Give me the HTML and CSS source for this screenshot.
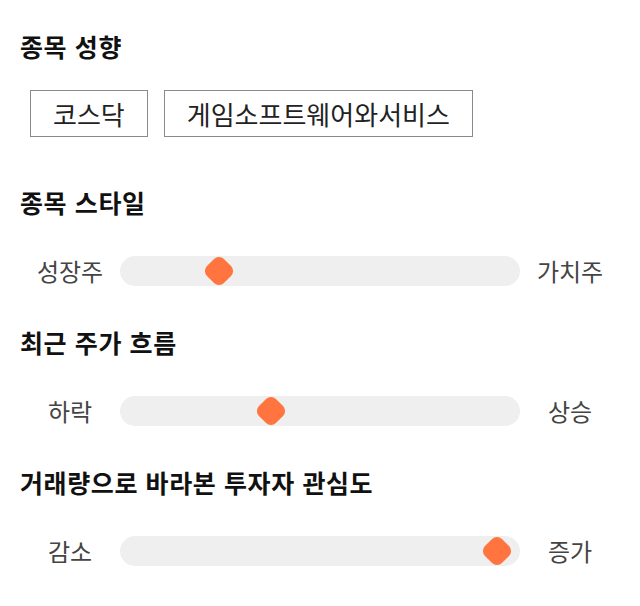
FILE: index.html
```html
<!DOCTYPE html>
<html lang="ko">
<head>
<meta charset="utf-8">
<link rel="stylesheet" href="styles.css">
</head>
<body>
<main class="page">
  <section class="section section-first">
    <h2 class="title">종목 성향</h2>
    <div class="tags">
      <span class="tag">코스닥</span>
      <span class="tag">게임소프트웨어와서비스</span>
    </div>
  </section>
  <section class="section">
    <h2 class="title">종목 스타일</h2>
    <div class="slider-row">
      <span class="label">성장주</span>
      <div class="track"><span class="thumb" style="left: 99px"></span></div>
      <span class="label">가치주</span>
    </div>
  </section>
  <section class="section">
    <h2 class="title">최근 주가 흐름</h2>
    <div class="slider-row">
      <span class="label">하락</span>
      <div class="track"><span class="thumb" style="left: 151px"></span></div>
      <span class="label">상승</span>
    </div>
  </section>
  <section class="section">
    <h2 class="title">거래량으로 바라본 투자자 관심도</h2>
    <div class="slider-row">
      <span class="label">감소</span>
      <div class="track"><span class="thumb" style="left: 377px"></span></div>
      <span class="label">증가</span>
    </div>
  </section>
</main>
</body>
</html>
```

FILE: styles.css
```css
html, body {
  margin: 0;
  padding: 0;
  background: #ffffff;
}
body {
  font-family: "Noto Sans CJK KR", "Noto Sans", sans-serif;
  color: #111111;
}
.page {
  padding: 30px 20px 0 20px;
  display: flex;
  flex-direction: column;
  gap: 40px;
}
.section {
  display: flex;
  flex-direction: column;
}
.section-first {
  padding-bottom: 9px;
}
.title {
  margin: 0;
  font-size: 25px;
  line-height: 32px;
  font-weight: 700;
  letter-spacing: 0.6px;
  color: #111111;
}
.tags {
  margin-top: 28px;
  display: flex;
  gap: 16px;
  padding-left: 10px;
}
.tag {
  display: inline-flex;
  align-items: center;
  height: 47px;
  box-sizing: border-box;
  padding: 0 22px;
  border: 1px solid #8a8a8a;
  font-size: 26px;
  color: #222222;
}
.slider-row {
  margin-top: 38px;
  display: flex;
  align-items: center;
  height: 30px;
}
.label {
  width: 100px;
  text-align: center;
  font-size: 24px;
  color: #444444;
  line-height: 30px;
}
.track {
  position: relative;
  width: 400px;
  height: 30px;
  background: #efefef;
  border-radius: 15px;
}
.thumb {
  position: absolute;
  top: 50%;
  width: 24px;
  height: 24px;
  margin-left: -12px;
  margin-top: -12px;
  background: #ff743f;
  border-radius: 7px;
  transform: rotate(45deg);
}
```
